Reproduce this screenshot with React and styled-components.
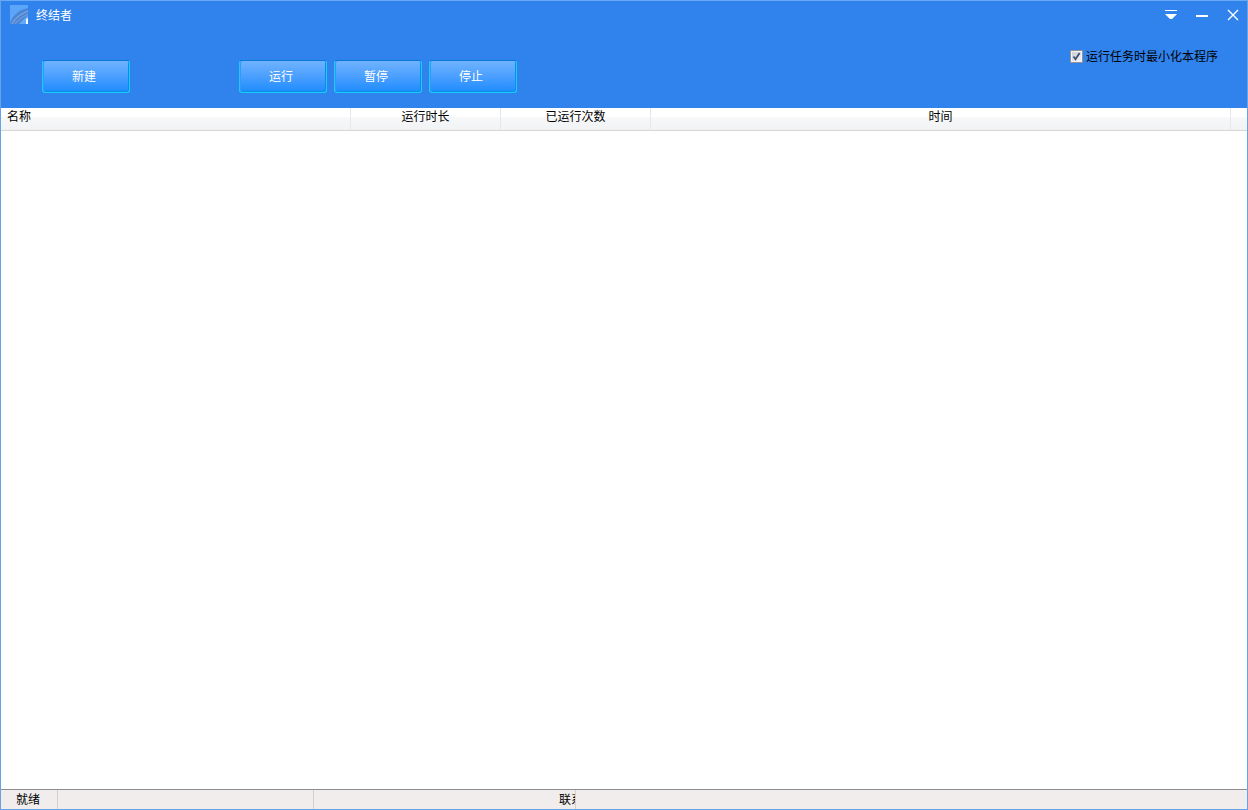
import React, { useState } from "react";
import styled, { createGlobalStyle } from "styled-components";

const GlobalStyle = createGlobalStyle`
  *, *::before, *::after { box-sizing: border-box; }
  body {
    margin: 0;
    background: #fff;
    color: #000;
    font: 12px/16px "Noto Sans CJK SC", sans-serif;
  }
  button, input { margin: 0; font: inherit; }
`;

const Window = styled.div`
  display: flex;
  flex-direction: column;
  min-height: 100vh;
  border: 1px solid #65a3e6;
  border-top-color: #6aaaf5;
`;

const Header = styled.header`
  height: 107px;
  background: #3082ed;
`;

const TitleBar = styled.div`
  display: flex;
  align-items: center;
  gap: 8px;
  height: 27px;
  padding: 0 4px 0 9px;
`;

const Title = styled.h1`
  flex: 1;
  margin: 0;
  color: #fff;
  font-size: 12px;
  font-weight: 400;
`;

const WindowControls = styled.div`
  display: flex;
  gap: 11px;
`;

const ControlButton = styled.button`
  display: flex;
  align-items: center;
  justify-content: center;
  width: 20px;
  height: 20px;
  padding: 0;
  border: 0;
  background: none;
  color: #fff;
`;

const Toolbar = styled.div`
  display: flex;
  justify-content: space-between;
  align-items: flex-start;
  padding: 20px 29px 0 41px;
`;

const Actions = styled.div`
  display: flex;
  gap: 109px;
  padding-top: 12px;
`;

const ButtonGroup = styled.div`
  display: flex;
  gap: 7px;
`;

const ActionButton = styled.button`
  width: 88px;
  height: 33px;
  padding: 0 4px 2px 0;
  border: 1px solid #1ccbfa;
  border-top-color: #0878dc;
  border-radius: 3px;
  background: linear-gradient(#70b3ff, #4a9fff 50%, #1e8cff);
  box-shadow: inset 1px 0 #2b9df5, inset -1px -1px #078fe9;
  color: #fff;
`;

const Option = styled.label`
  display: flex;
  align-items: center;
  gap: 3px;
`;

const CheckBox = styled.span`
  display: grid;
  width: 13px;
  height: 13px;

  > * { grid-area: 1 / 1; }
  > svg { pointer-events: none; }
  > input:not(:checked) + svg { visibility: hidden; }
`;

const CheckInput = styled.input`
  appearance: none;
  width: 13px;
  height: 13px;
  border: 1px solid #8e9296;
  background: linear-gradient(135deg, #c4cbd3, #f6f6f6);
  box-shadow: inset 0 0 0 1px #f4f4f4;
`;

const TaskArea = styled.main`
  flex: 1;
  background: #fff;
`;

const TaskTable = styled.table`
  width: 100%;
  table-layout: fixed;
  border-collapse: separate;
  border-spacing: 0;
`;

const HeadRow = styled.tr`
  background: linear-gradient(#fff 0 9px, #f7f8fa 9px, #f1f2f4);
`;

const HeadCell = styled.th`
  width: ${(p) => p.$width || "auto"};
  height: 23px;
  padding: 0 6px 6px;
  border-bottom: 1px solid #d5d5d5;
  border-right: 1px solid #e6e7ea;
  font-weight: 400;
  text-align: ${(p) => p.$align || "center"};
  vertical-align: top;
`;

const HeadEnd = styled.td`
  width: 16px;
  padding: 0;
  border-bottom: 1px solid #d5d5d5;
`;

const StatusBar = styled.footer`
  display: flex;
  height: 20px;
  border-top: 1px solid #8b8d8f;
  background: #f0edec;
`;

const StatusPane = styled.div`
  width: ${(p) => p.$width};
  padding: 1px 0 0 ${(p) => p.$indent || "0"};
  border-right: 1px solid #d3d0cf;
  overflow: hidden;
  white-space: nowrap;
`;

const AppLogo = () => (
  <svg width="18" height="19" viewBox="0 0 18 19" aria-hidden="true">
    <path d="M0 0H18V19H0Z" fill="#5ba6fb" />
    <path d="M0 19C1 12 8 5 18 3V11L11 19Z" fill="#4b86d4" />
    <path d="M2 19C5 13 10 9 18 6" fill="none" stroke="#7ba3de" strokeWidth="1.2" />
    <path d="M5 19C8 15 12 12 18 9" fill="none" stroke="#6b98dc" strokeWidth="1.2" />
    <path d="M9 19L18 10V19Z" fill="#63aafa" />
    <path d="M16 14L18 13V19H16Z" fill="#f4fbff" />
  </svg>
);

const MenuIcon = () => (
  <svg width="14" height="12" viewBox="0 0 14 12" aria-hidden="true">
    <path d="M1 1H13V2H1ZM1 5H13L8 10H6Z" fill="currentColor" />
  </svg>
);

const MinimizeIcon = () => (
  <svg width="12" height="12" viewBox="0 0 12 12" aria-hidden="true">
    <path d="M0 6H12V8H0Z" fill="currentColor" />
  </svg>
);

const CloseIcon = () => (
  <svg width="12" height="12" viewBox="0 0 12 12" aria-hidden="true">
    <path d="M1 1L11 11M11 1L1 11" fill="none" stroke="currentColor" strokeWidth="1.4" />
  </svg>
);

const CheckMark = () => (
  <svg width="13" height="13" viewBox="0 0 13 13" aria-hidden="true">
    <path d="M3.5 6.5L5.5 9.2L9.6 3" fill="none" stroke="#3f4c78" strokeWidth="1.8" />
  </svg>
);

export default function App() {
  const [minimizeOnRun, setMinimizeOnRun] = useState(true);

  return (
    <>
      <GlobalStyle />
      <Window>
        <Header>
          <TitleBar>
            <AppLogo />
            <Title>终结者</Title>
            <WindowControls>
              <ControlButton aria-label="菜单"><MenuIcon /></ControlButton>
              <ControlButton aria-label="最小化"><MinimizeIcon /></ControlButton>
              <ControlButton aria-label="关闭"><CloseIcon /></ControlButton>
            </WindowControls>
          </TitleBar>
          <Toolbar>
            <Actions>
              <ActionButton>新建</ActionButton>
              <ButtonGroup>
                <ActionButton>运行</ActionButton>
                <ActionButton>暂停</ActionButton>
                <ActionButton>停止</ActionButton>
              </ButtonGroup>
            </Actions>
            <Option htmlFor="minimize-on-run">
              <CheckBox>
                <CheckInput
                  id="minimize-on-run"
                  type="checkbox"
                  checked={minimizeOnRun}
                  onChange={(e) => setMinimizeOnRun(e.target.checked)}
                />
                <CheckMark />
              </CheckBox>
              运行任务时最小化本程序
            </Option>
          </Toolbar>
        </Header>
        <TaskArea>
          <TaskTable>
            <thead>
              <HeadRow>
                <HeadCell $width="350px" $align="left">名称</HeadCell>
                <HeadCell $width="150px">运行时长</HeadCell>
                <HeadCell $width="150px">已运行次数</HeadCell>
                <HeadCell>时间</HeadCell>
                <HeadEnd />
              </HeadRow>
            </thead>
            <tbody />
          </TaskTable>
        </TaskArea>
        <StatusBar>
          <StatusPane $width="57px" $indent="15px">就绪</StatusPane>
          <StatusPane $width="256px" />
          <StatusPane $width="262px" $indent="245px">联系</StatusPane>
        </StatusBar>
      </Window>
    </>
  );
}
